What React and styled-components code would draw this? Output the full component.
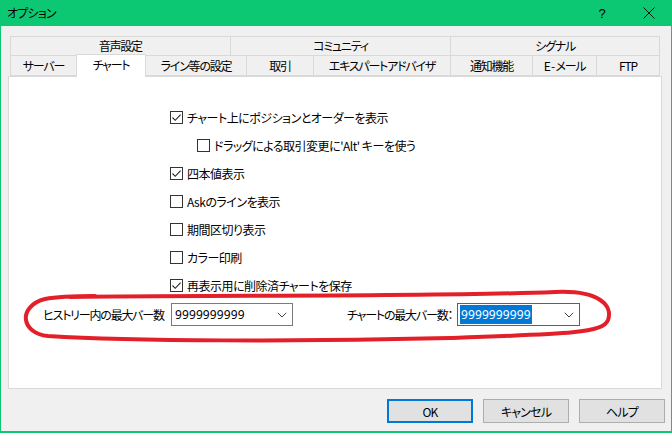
import React from "react";
import styled, { createGlobalStyle } from "styled-components";

const GREEN = "#0cc873";
const FONT = `"Noto Sans CJK JP", "Noto Sans", sans-serif`;

const Global = createGlobalStyle`
  html, body { margin: 0; padding: 0; background: #f0f0f0; }
  body { width: 672px; height: 433px; overflow: hidden; font-family: ${FONT}; font-size: 12px; color: #000; }
  * { box-sizing: border-box; }
`;

const Window = styled.div`
  position: relative;
  width: 672px;
  height: 433px;
  display: flex;
  flex-direction: column;
  background: #f0f0f0;
  border: 1px solid ${GREEN};
  border-top: none;
  border-bottom-width: 2px;
  font-feature-settings: "palt";
`;

const TitleBar = styled.div`
  height: 26px;
  margin: 0 -1px;
  background: ${GREEN};
  display: flex;
  align-items: center;
  padding-left: 7px;
  flex-shrink: 0;
`;

const Title = styled.div`
  flex: 1;
  font-size: 12px;
  line-height: 26px;
  letter-spacing: -0.8px;
`;

const TitleButton = styled.div`
  width: ${(p) => p.$w}px;
  height: 26px;
  display: flex;
  align-items: center;
  justify-content: center;
  font-size: 13px;
  font-family: "Liberation Sans", sans-serif;
`;

const Body = styled.div`
  flex: 1;
  display: flex;
  flex-direction: column;
  padding: 10px 7px 0 7px;
`;

const TabStrip = styled.div`
  margin: 0 4px 0 2px;
  display: flex;
  flex-direction: column;
`;

const TabRow = styled.div`
  display: flex;
  height: 20px;
  align-items: flex-start;
`;

const Tab = styled.div`
  position: relative;
  width: ${(p) => p.$w}px;
  height: ${(p) => (p.$selected ? 23 : 20)}px;
  margin-top: ${(p) => (p.$selected ? -2 : 0)}px;
  margin-left: -1px;
  background: ${(p) => (p.$selected ? "#fff" : "#f0f0f0")};
  border: 1px solid #d9d9d9;
  border-bottom: ${(p) => (p.$selected ? "none" : "1px solid #d9d9d9")};
  border-top: ${(p) => (p.$top || p.$selected ? "1px solid #d9d9d9" : "none")};
  z-index: ${(p) => (p.$selected ? 2 : 0)};
  display: flex;
  align-items: center;
  justify-content: center;
  padding-bottom: ${(p) => (p.$selected ? 4 : 1)}px;
  font-size: 12px;
  letter-spacing: -1.2px;
  white-space: nowrap;
  &:first-child { margin-left: 0; }
`;

const Panel = styled.div`
  height: 313px;
  margin-right: 2px;
  background: #fff;
  border: 1px solid #d9d9d9;
  display: flex;
  flex-direction: column;
  padding-top: 26px;
`;

const CheckList = styled.div`
  display: flex;
  flex-direction: column;
  margin-left: 161px;
`;

const CheckRow = styled.div`
  height: 28px;
  display: flex;
  align-items: center;
  gap: 4px;
  margin-left: ${(p) => (p.$indent ? 27 : 0)}px;
  white-space: nowrap;
  letter-spacing: -0.5px;
`;

const Box = styled.div`
  width: 13px;
  height: 13px;
  border: 1px solid #333;
  background: #fff;
  display: flex;
  align-items: center;
  justify-content: center;
  flex-shrink: 0;
`;

const BarRow = styled.div`
  margin-top: 4px;
  height: 23px;
  display: grid;
  grid-template-columns: 128px 122px 54px 110px 123px;
  align-items: center;
  padding-left: 34px;
`;

const Label = styled.div`
  white-space: nowrap;
  letter-spacing: -1.2px;
  text-align: ${(p) => (p.$right ? "right" : "left")};
  padding-right: ${(p) => (p.$right ? 9 : 0)}px;
`;

const Combo = styled.div`
  height: 23px;
  border: 1px solid ${(p) => (p.$focused ? "#0078d7" : "#7a7a7a")};
  background: #fff;
  display: flex;
  align-items: center;
  padding: 0 5px 0 2px;
`;

const ComboText = styled.span`
  flex: 1;
  display: flex;
  align-items: center;
  font-family: "Noto Sans", sans-serif;
  font-size: 12px;
  letter-spacing: 0.1px;
`;

const Selected = styled.span`
  background: ${(p) => (p.$on ? "#0078d7" : "transparent")};
  color: ${(p) => (p.$on ? "#fff" : "#000")};
  padding: 1px 1px;
  line-height: 17px;
`;

const Buttons = styled.div`
  display: flex;
  justify-content: flex-end;
  gap: 10px;
  margin-top: 10px;
  margin-right: -1px;
`;

const Button = styled.div`
  width: 86px;
  height: 24px;
  background: #e1e1e1;
  border: ${(p) => (p.$default ? "2px solid #0078d7" : "1px solid #adadad")};
  display: flex;
  align-items: center;
  justify-content: center;
  font-size: 12px;
  letter-spacing: -0.8px;
`;

const Overlay = styled.svg`
  position: absolute;
  left: -1px;
  top: 0;
  width: 672px;
  height: 433px;
  pointer-events: none;
`;

const Check = () => (
  <svg width="11" height="11" viewBox="0 0 11 11">
    <path d="M1.5 5.5 L4.2 8.3 L9.6 2.6" fill="none" stroke="#222" strokeWidth="1.1" />
  </svg>
);

const Chevron = () => (
  <svg width="10" height="6" viewBox="0 0 10 6">
    <path d="M0.8 0.8 L5 5 L9.2 0.8" fill="none" stroke="#444" strokeWidth="1" />
  </svg>
);

const upperTabs = [
  ["音声設定", 221],
  ["コミュニティ", 222],
  ["シグナル", 210],
];

const lowerTabs = [
  ["サーバー", 67],
  ["チャート", 70, true],
  ["ライン等の設定", 102],
  ["取引", 68],
  ["エキスパートアドバイザ", 138],
  ["通知機能", 83],
  ["E - メール", 65],
  ["FTP", 64],
];

const checks = [
  ["チャート上にポジションとオーダーを表示", true],
  ["ドラッグによる取引変更に'Alt' キーを使う", false, true],
  ["四本値表示", true],
  ["Askのラインを表示", false],
  ["期間区切り表示", false],
  ["カラー印刷", false],
  ["再表示用に削除済チャートを保存", true],
];

export default function App() {
  return (
    <>
      <Global />
      <Window>
        <TitleBar>
          <Title>オプション</Title>
          <TitleButton $w={24}>?</TitleButton>
          <TitleButton $w={12} />
          <TitleButton $w={46}>
            <svg width="12" height="12" viewBox="0 0 12 12">
              <path d="M0.5 0.5 L11.5 11.5 M11.5 0.5 L0.5 11.5" stroke="#111" strokeWidth="1" />
            </svg>
          </TitleButton>
        </TitleBar>
        <Body>
          <TabStrip>
            <TabRow>
              {upperTabs.map(([t, w]) => (
                <Tab key={t} $w={w} $top>
                  {t}
                </Tab>
              ))}
            </TabRow>
            <TabRow>
              {lowerTabs.map(([t, w, s]) => (
                <Tab key={t} $w={w} $selected={s}>
                  {t}
                </Tab>
              ))}
            </TabRow>
          </TabStrip>
          <Panel>
            <CheckList>
              {checks.map(([t, c, indent]) => (
                <CheckRow key={t} $indent={indent}>
                  <Box>{c && <Check />}</Box>
                  <span>{t}</span>
                </CheckRow>
              ))}
            </CheckList>
            <BarRow>
              <Label>ヒストリー内の最大バー数</Label>
              <Combo>
                <ComboText>
                  <Selected>9999999999</Selected>
                </ComboText>
                <Chevron />
              </Combo>
              <div />
              <Label $right>チャートの最大バー数：</Label>
              <Combo $focused>
                <ComboText>
                  <Selected $on>9999999999</Selected>
                </ComboText>
                <Chevron />
              </Combo>
            </BarRow>
          </Panel>
          <Buttons>
            <Button $default>OK</Button>
            <Button>キャンセル</Button>
            <Button>ヘルプ</Button>
          </Buttons>
        </Body>
        <Overlay viewBox="0 0 672 433">
          <path
            d="M70 297 C 220 295, 430 297, 555 292 C 600 290, 613 306, 608 320 C 603 333, 570 334, 450 338 C 300 342, 130 341, 48 336 C 20 333, 18 306, 45 299 C 60 296, 80 296, 95 296"
            fill="none"
            stroke="#e3202a"
            strokeWidth="4"
            strokeLinecap="round"
          />
        </Overlay>
      </Window>
    </>
  );
}
